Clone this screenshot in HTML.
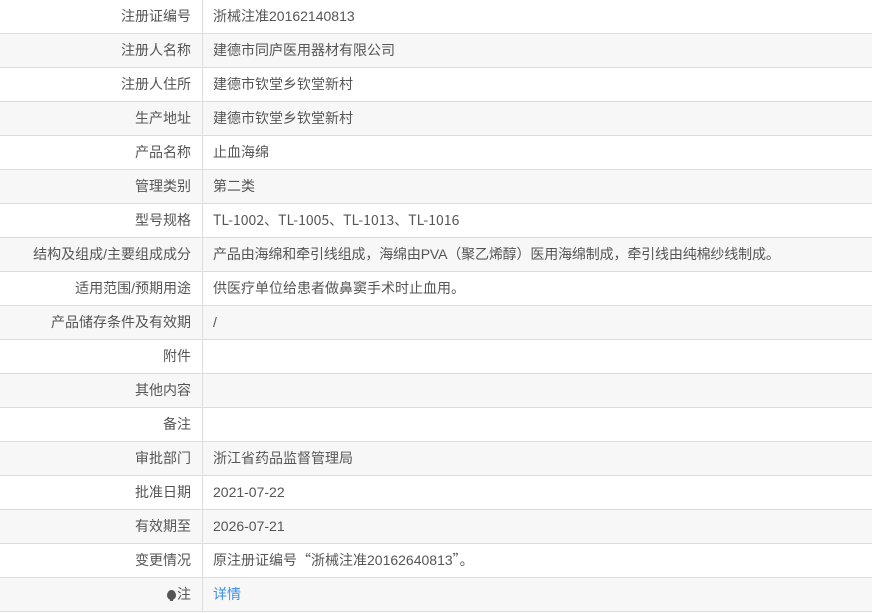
<!DOCTYPE html>
<html><head><meta charset="utf-8"><style>
body{margin:0;width:872px;height:613px;overflow:hidden;background:#fff;font-family:"Liberation Sans","Noto Sans CJK SC",sans-serif;font-size:14px;color:#555;}
.r{position:absolute;left:0;width:872px;height:33px;border-bottom:1px solid #ddd;}
.r.g{background:#f7f7f7;}
.l{position:absolute;left:0;top:0;width:191px;height:33px;line-height:33px;text-align:right;padding-right:11px;border-right:1px solid #ddd;}
.v{position:absolute;left:213px;top:0;height:33px;line-height:33px;white-space:nowrap;}
.n{font-family:"Noto Sans CJK SC",sans-serif;line-height:32px;}
a{color:#3b8fe8;text-decoration:none;}
.b{display:inline-block;width:9px;height:10px;background:#555;border-radius:50% 50% 50% 50%/55% 55% 45% 45%;vertical-align:-1px;margin-right:1px;position:relative}
.b:after{content:"";position:absolute;left:3px;top:9px;width:3px;height:2px;background:#555}
</style></head><body>
<div class="r" style="top:0"><div class="l">注册证编号</div><div class="v">浙械注准20162140813</div></div>
<div class="r g" style="top:34px"><div class="l">注册人名称</div><div class="v">建德市同庐医用器材有限公司</div></div>
<div class="r" style="top:68px"><div class="l">注册人住所</div><div class="v">建德市钦堂乡钦堂新村</div></div>
<div class="r g" style="top:102px"><div class="l">生产地址</div><div class="v">建德市钦堂乡钦堂新村</div></div>
<div class="r" style="top:136px"><div class="l">产品名称</div><div class="v">止血海绵</div></div>
<div class="r g" style="top:170px"><div class="l">管理类别</div><div class="v">第二类</div></div>
<div class="r" style="top:204px"><div class="l">型号规格</div><div class="v n">TL-1002、TL-1005、TL-1013、TL-1016</div></div>
<div class="r g" style="top:238px"><div class="l">结构及组成/主要组成成分</div><div class="v" style="letter-spacing:-0.15px">产品由海绵和牵引线组成，海绵由PVA（聚乙烯醇）医用海绵制成，牵引线由纯棉纱线制成。</div></div>
<div class="r" style="top:272px"><div class="l">适用范围/预期用途</div><div class="v">供医疗单位给患者做鼻窦手术时止血用。</div></div>
<div class="r g" style="top:306px"><div class="l">产品储存条件及有效期</div><div class="v">/</div></div>
<div class="r" style="top:340px"><div class="l">附件</div><div class="v"></div></div>
<div class="r g" style="top:374px"><div class="l">其他内容</div><div class="v"></div></div>
<div class="r" style="top:408px"><div class="l">备注</div><div class="v"></div></div>
<div class="r g" style="top:442px"><div class="l">审批部门</div><div class="v">浙江省药品监督管理局</div></div>
<div class="r" style="top:476px"><div class="l">批准日期</div><div class="v">2021-07-22</div></div>
<div class="r g" style="top:510px"><div class="l">有效期至</div><div class="v">2026-07-21</div></div>
<div class="r" style="top:544px"><div class="l">变更情况</div><div class="v">原注册证编号<span class="n">“</span>浙械注准20162640813<span class="n">”</span>。</div></div>
<div class="r g" style="top:578px"><div class="l"><span class="b"></span>注</div><div class="v"><a>详情</a></div></div>
</body></html>
